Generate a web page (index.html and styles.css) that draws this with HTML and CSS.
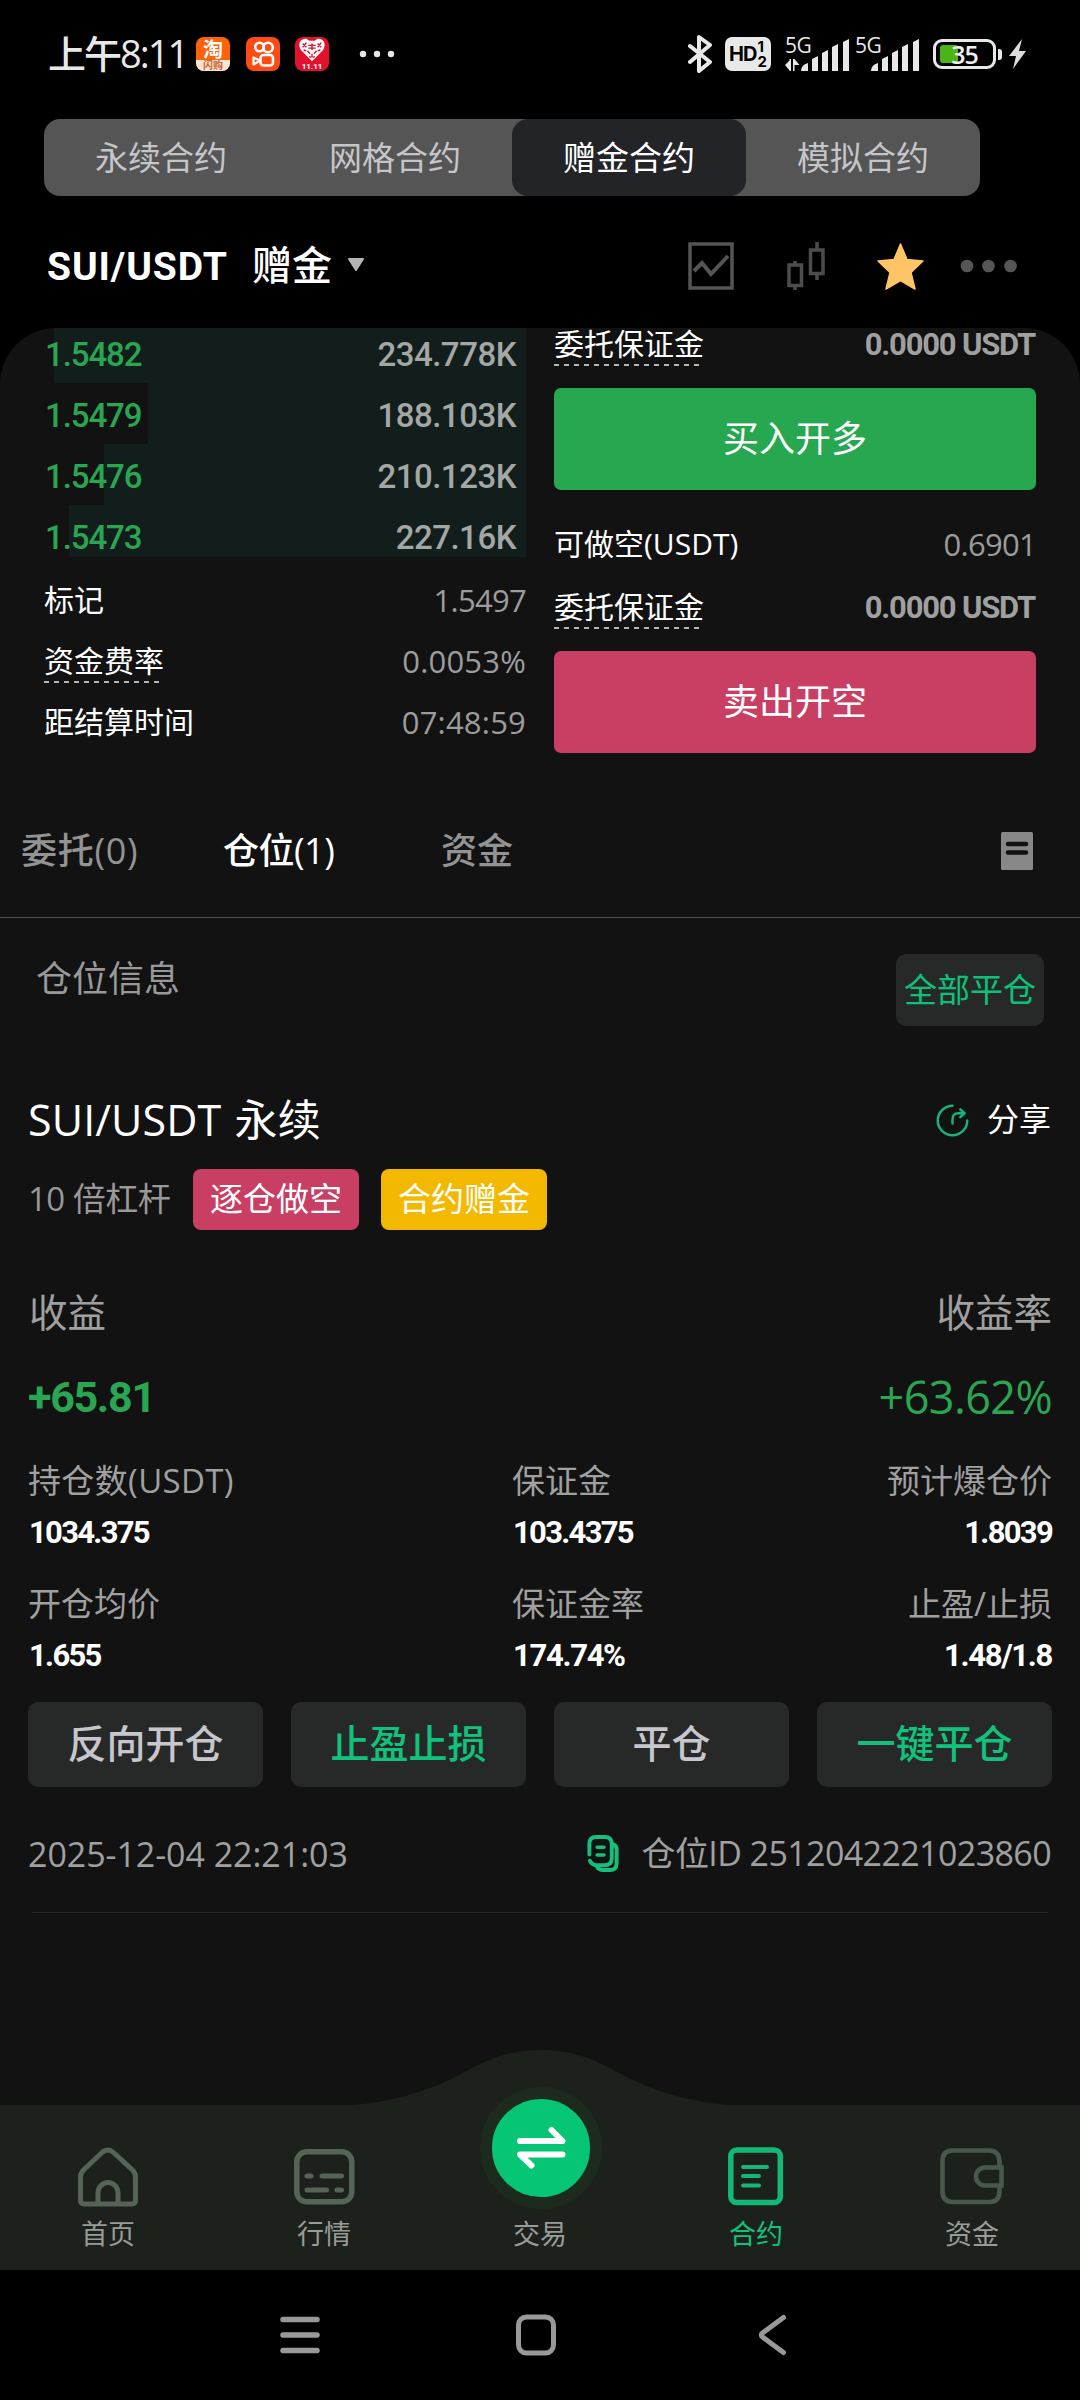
FILE: index.html
```html
<!DOCTYPE html>
<html lang="zh-CN">
<head>
<meta charset="utf-8">
<meta name="viewport" content="width=1080">
<title>SUI/USDT 赠金合约</title>
<link rel="stylesheet" href="styles.css">
</head>
<body>
<div class="screen">
  <header class="status">
    <div class="status-left">
      <span class="clock">上午8:11</span>
      <span class="app app-tao"><b>淘</b><i>闪购</i></span>
      <span class="app app-kuai">
        <svg viewBox="0 0 34 34" fill="none" stroke="#fff" stroke-width="2.6"><circle cx="13.5" cy="10" r="4.3"/><circle cx="22" cy="10.500" r="4.800"/><rect x="14.500" y="18" width="12.500" height="10.500" rx="3"/><path d="M14 23.500L7.500 20.500v7z" stroke-linejoin="round" stroke-width="2.200"/></svg>
      </span>
      <span class="app app-heart">
        <svg viewBox="0 0 34 28"><path d="M17 26L5 14C1 7 5 1 11 2l3 2h6l3-2c6-1 10 5 6 12z" fill="#fff"/><path d="M7 7l4 4M11 6l-4 5M23 7l4 4M27 6l-4 5M12 15l3 3M22 15l-3 3M13 9h8M13 12h8M17 7v7M8 14l3 1M26 14l-3 1M17 18v4M14 21l2 1M20 21l-2 1" stroke="#d8102c" stroke-width="1.500"/></svg>
        <i>11.11</i>
      </span>
      <svg class="more" viewBox="0 0 36 8" fill="#e8e8e8"><circle cx="4" cy="4" r="3.200"/><circle cx="18" cy="4" r="3.200"/><circle cx="32" cy="4" r="3.200"/></svg>
    </div>
    <div class="status-right">
      <svg class="bt" viewBox="0 0 24 40" fill="none" stroke="#e8e8e8" stroke-width="4" stroke-linejoin="round" stroke-linecap="round"><path d="M2 12l20 16-11 9V3l11 8L2 28"/></svg>
      <span class="hd"><b>HD</b><span><i>1</i><i>2</i></span></span>
      <span class="signal signal-one"><em>5G</em>
        <svg viewBox="0 0 66 34" fill="#e8e8e8"><path d="M2 28l5-5v11zM6.500 22H8v12H6.500zM10 22h1.500v12H10zM11.500 22l5 6h-5z"/><path d="M18 34q0-6 7-8v8zM29 22l6-3v15h-6zM39 16l6-3v21h-6zM49 10l6-3v27h-6zM60 5l6-3v32h-6z"/></svg>
      </span>
      <span class="signal signal-two"><em>5G</em>
        <svg viewBox="0 0 66 34" fill="#e8e8e8"><path d="M18 34q0-6 7-8v8zM29 22l6-3v15h-6zM39 16l6-3v21h-6zM49 10l6-3v27h-6zM60 5l6-3v32h-6z"/></svg>
      </span>
      <span class="battery"><i></i><b>35</b></span>
      <svg class="bolt" viewBox="0 0 17 30" fill="#dcdcdc"><path d="M13 0L0 17h7L4 30l13-18h-7z"/></svg>
    </div>
  </header>

  <nav class="segments">
    <a>永续合约</a><a>网格合约</a><a class="on">赠金合约</a><a>模拟合约</a>
  </nav>

  <div class="pair">
    <strong>SUI/USDT</strong><span class="pair-type">赠金</span>
    <svg class="caret" viewBox="0 0 18 14"><path d="M2 1h14L9 12z" fill="#b4b4b4" stroke="#b4b4b4" stroke-width="2" stroke-linejoin="round"/></svg>
    <div class="tools">
      <svg width="46" height="48" viewBox="0 0 46 48" fill="none" stroke="#555" stroke-width="3.500"><rect x="2" y="2" width="42" height="44"/><path d="M6 29l8-8 9 11 17-18" stroke-width="4"/></svg>
      <svg width="38" height="48" viewBox="0 0 38 48" fill="none" stroke="#4c4c4c" stroke-width="3.500"><rect x="2" y="23" width="12.500" height="20.500"/><path d="M8 19v4M8 44v4M30 0v7M30 33v5"/><rect x="23.500" y="8" width="12.500" height="23.500"/></svg>
      <svg width="47" height="48" viewBox="0 0 47 48"><path d="M23.500 2l6.500 15.500 16 1.500-12 11.500 4 16.500-14.500-8.500L9 47l4-16.500L1 19l16-1.500z" fill="#ffc466" stroke="#ffc466" stroke-width="1.500" stroke-linejoin="round"/></svg>
      <svg width="58" height="14" viewBox="0 0 58 14" fill="#555"><circle cx="7" cy="7" r="6.300"/><circle cx="28.500" cy="7" r="6.300"/><circle cx="50.500" cy="7" r="6.300"/></svg>
    </div>
  </div>

  <main class="sheet">
    <section class="trade">
      <div class="left">
        <div class="book">
          <div class="level" style="--depth:97.9%"><b>1.5482</b><span>234.778K</span></div>
          <div class="level" style="--depth:78.4%"><b>1.5479</b><span>188.103K</span></div>
          <div class="level" style="--depth:87.5%"><b>1.5476</b><span>210.123K</span></div>
          <div class="level" style="--depth:94.8%"><b>1.5473</b><span>227.16K</span></div>
        </div>
        <div class="stats">
          <div class="stat"><span>标记</span><em>1.5497</em></div>
          <div class="stat wide"><span class="dashed">资金费率</span><em>0.0053%</em></div>
          <div class="stat wide"><span>距结算时间</span><em>07:48:59</em></div>
        </div>
      </div>
      <div class="right">
        <div class="line first"><span class="dashed">委托保证金</span><b>0.0000 USDT</b></div>
        <button class="order buy">买入开多</button>
        <div class="line avail"><span>可做空(USDT)</span><em>0.6901</em></div>
        <div class="line"><span class="dashed">委托保证金</span><b>0.0000 USDT</b></div>
        <button class="order sell">卖出开空</button>
      </div>
    </section>

    <nav class="tabs">
      <a>委托(0)</a><a class="on">仓位(1)</a><a>资金</a>
      <svg viewBox="0 0 32 38"><rect width="32" height="38" rx="1.500" fill="#878787"/><path d="M7 12h18M7 20.500h18" stroke="#121212" stroke-width="4.500" stroke-linecap="round"/></svg>
    </nav>

    <div class="info"><span>仓位信息</span><button>全部平仓</button></div>

    <article class="card">
      <div class="row title">
        <h2>SUI/USDT 永续</h2>
        <span class="share"><svg viewBox="0 0 34 34" fill="none" stroke="#14b67a" stroke-width="2.500" stroke-linecap="round"><path d="M17 1.800A15.200 15.200 0 1 0 32.200 17"/><path d="M17 20v-4c0-4 2-6.500 6-6.500h5M25 5.500l4.500 4-4.500 4" stroke-linejoin="round"/></svg><i>分享</i></span>
      </div>
      <div class="tags"><span>10 倍杠杆</span><b class="short">逐仓做空</b><b class="bonus">合约赠金</b></div>
      <div class="row pnl-label"><span>收益</span><span>收益率</span></div>
      <div class="row pnl"><b>+65.81</b><span>+63.62%</span></div>
      <div class="grid">
        <div><span>持仓数(USDT)</span><b>1034.375</b></div>
        <div><span>保证金</span><b>103.4375</b></div>
        <div><span>预计爆仓价</span><b>1.8039</b></div>
        <div><span>开仓均价</span><b>1.655</b></div>
        <div><span>保证金率</span><b>174.74%</b></div>
        <div><span>止盈/止损</span><b>1.48/1.8</b></div>
      </div>
      <div class="actions"><button>反向开仓</button><button class="green">止盈止损</button><button>平仓</button><button class="green">一键平仓</button></div>
      <div class="row meta">
        <span class="date">2025-12-04 22:21:03</span>
        <span class="pid"><svg viewBox="0 0 32 38" fill="none" stroke="#14c07c" stroke-width="4" stroke-linecap="round" stroke-linejoin="round"><path d="M2 20V9q0-7 7-7h9q7 0 7 7v15q0 7-7 7H9q-4 0-6.500-4.500"/><path d="M26 9.500q4 1 4 5.500v14q0 7-7 7h-7q-4 0-6-3"/><path d="M10 12.500h7M10 20.500h7" stroke-width="3.600"/></svg>仓位ID 2512042221023860</span>
      </div>
      <hr>
    </article>
  </main>

  <nav class="bottom">
    <svg class="hump" viewBox="0 0 420 56"><path d="M0 56c50-1 93-12 130-32 27-15 48-24 80-24s53 9 80 24c37 20 80 31 130 32z" fill="#1d211c"/></svg>
    <a><svg viewBox="0 0 64 64" fill="none" stroke="#566456" stroke-width="5"><path d="M4.500 56V33q0-4 3-7L26 8.500q6-5 11.500 0L56.500 26q3 3 3 7v23q0 4-4 4h-47q-4 0-4-4z"/><path d="M22 60V49a10 10.500 0 0 1 20 0v11"/></svg>首页</a>
    <a><svg viewBox="0 0 64 64" fill="none" stroke="#566456" stroke-width="5.500" stroke-linecap="round"><rect x="4.800" y="7.800" width="55" height="50" rx="10"/><path d="M15 32h4M30 32h19.500M15 46h19.500M45 46h4.500" stroke-width="5"/></svg>行情</a>
    <a><svg viewBox="0 0 64 64"></svg>交易</a>
    <a class="on"><svg viewBox="0 0 64 64" fill="none" stroke="#14b876" stroke-width="5.500" stroke-linecap="round"><rect x="6.800" y="6" width="49.500" height="52.500" rx="6"/><path d="M19 23h24M19 32h16M19 41.500h16" stroke-width="4"/></svg>合约</a>
    <a><svg viewBox="0 0 64 64" fill="none" stroke="#48584a" stroke-width="4.600"><path d="M59.500 22v-4q0-11-10-11.500H12Q2.500 7 2.500 17v30q0 10.500 9.500 11h37.500q10 0 10-11v-4"/><path d="M61.500 23.500H45a9 9 0 0 0 0 18h16.500z"/></svg>资金</a>
    <span class="swap"><svg viewBox="0 0 98 98" fill="none" stroke="#fff" stroke-width="6" stroke-linecap="round" stroke-linejoin="round"><path d="M28 42h42.500L59.500 31M70.500 55.500H28L39.500 66.500"/></svg></span>
  </nav>

  <footer class="system">
    <svg viewBox="0 0 42 42" stroke="#9b9898" stroke-width="5.500" stroke-linecap="round"><path d="M4 5.500h34M4 21h34M4 36.500h34"/></svg>
    <svg viewBox="0 0 42 42" fill="none" stroke="#9b9898" stroke-width="5"><rect x="3.500" y="3" width="35" height="36" rx="8"/></svg>
    <svg viewBox="0 0 42 42" fill="none" stroke="#9b9898" stroke-width="5" stroke-linecap="round" stroke-linejoin="round"><path d="M32.500 3.500L11.500 19q-2.500 2 0 4l21 15.500"/></svg>
  </footer>
</div>
</body>
</html>
```
FILE: styles.css
```css
* { box-sizing: border-box; }
body { margin: 0; background: #000; }
i, em { font-style: normal; }
svg { display: block; flex: none; }
a, span, b, button, h2 { white-space: nowrap; }
button { border: 0; padding: 0; font-family: inherit; color: inherit; }

.screen {
  width: 1080px;
  height: 2400px;
  overflow: hidden;
  display: flex;
  flex-direction: column;
  background: #000;
  color: #fff;
  font-family: "Open Sans", "Noto Sans CJK SC", sans-serif;
}

/* status bar */
.status { height: 119px; padding: 34px 54px 0 48px; display: flex; justify-content: space-between; }
.status-left, .status-right { display: flex; align-items: center; height: 40px; }
.clock { width: 148px; font-size: 38px; line-height: 40px; letter-spacing: -2px; color: #e8e8e8; font-weight: 500; padding-bottom: 2px; }
.app { width: 34px; height: 34px; margin-right: 15.500px; border-radius: 8px; overflow: hidden; display: flex; flex-direction: column; align-items: center; background: #ff4a12; }
.app svg { width: 34px; height: 34px; }
.app-tao { background: #ff6208; }
.app-tao b { height: 23px; font: 700 20px/23px "Noto Sans CJK SC", sans-serif; }
.app-tao i { width: 34px; height: 11px; background: #fbe6d6; color: #c8622c; font-size: 10px; line-height: 11px; text-align: center; font-weight: 700; }
.app-heart { background: #e3122c; }
.app-heart svg { height: 26px; width: 32px; }
.app-heart i { font: 700 8px/8px Roboto, sans-serif; }
.more { width: 36px; height: 8px; margin-left: 14px; }
.bt { width: 24px; height: 40px; margin-right: 13px; }
.hd { width: 46px; height: 34px; border-radius: 7px; background: #e8e8e8; color: #000; display: flex; align-items: center; justify-content: center; gap: 1px; margin-right: 12px; font-family: Inter, sans-serif; }
.hd b { font-size: 20px; letter-spacing: -1px; }
.hd span { display: flex; flex-direction: column; font-size: 15px; line-height: 15px; font-weight: 700; }
.signal { position: relative; width: 66px; height: 34px; }
.signal svg { width: 66px; height: 34px; }
.signal em { position: absolute; left: 2px; top: -2px; font-size: 21px; line-height: 20px; color: #e8e8e8; letter-spacing: -.5px; font-weight: 500; }
.signal-two { margin-left: 4px; }
.battery { position: relative; width: 63px; height: 30px; margin-left: 14px; border: 3px solid #e8e8e8; border-radius: 9px; display: flex; align-items: center; justify-content: center; }
.battery::after { content: ""; position: absolute; left: 62px; top: 7px; width: 4px; height: 11px; border-radius: 0 3px 3px 0; background: #e8e8e8; }
.battery i { position: absolute; left: 4px; top: 3px; width: 18px; height: 18px; border-radius: 3px; background: #4bb514; }
.battery b { position: relative; font-size: 25px; line-height: 24px; font-weight: 600; letter-spacing: -1px; color: #eee; }
.bolt { width: 17px; height: 30px; margin-left: 13px; }

/* contract type switch */
.segments { width: 936px; height: 77px; margin-left: 44px; flex: none; display: flex; border-radius: 16px; background: #555; }
.segments a { flex: 1; text-align: center; font-size: 33px; line-height: 77px; color: #c5c5ca; }
.segments .on { border-radius: 16px; background: #232428; color: #fff; }

/* pair header */
.pair { height: 132px; flex: none; padding: 0 62px 0 47px; display: flex; align-items: center; }
.pair strong { width: 205px; font: 700 39px/60px Roboto, sans-serif; letter-spacing: .9px; padding-top: 10px; }
.pair-type { width: 95px; font-size: 40px; line-height: 60px; font-weight: 500; padding-top: 5px; }
.caret { width: 18px; height: 14px; margin-top: 6px; }
.tools { flex: 1; margin-top: 8px; display: flex; align-items: center; justify-content: flex-end; }
.tools svg:nth-child(2) { margin-left: 53px; }
.tools svg:nth-child(3) { margin-left: 52px; }
.tools svg:nth-child(4) { margin-left: 36px; }

/* main sheet */
.sheet { height: 1777px; flex: none; overflow: hidden; border-radius: 56px 56px 0 0; background: #121212; }
.trade { height: 457px; padding: 0 44px; display: grid; grid-template-columns: 1fr 1fr; gap: 28px; }
.book { margin-top: -6px; }
.level { height: 61px; padding: 2px 10px 0 1px; display: flex; justify-content: space-between; font: 500 33px/61px Roboto, sans-serif; background: linear-gradient(#121e1b, #121e1b) right / var(--depth) 100% no-repeat; }
.level:last-child { height: 52px; }
.level b { color: #2aa653; font-weight: 500; letter-spacing: -1.100px; }
.level span { color: #a3a7a5; letter-spacing: -.5px; }
.stats { margin-top: 12px; }
.stat { height: 61px; display: flex; align-items: center; justify-content: space-between; }
.stat span, .line span { font-size: 30px; line-height: 44px; }
.stat em, .line em { font-size: 31px; line-height: 44px; color: #9c9c9c; letter-spacing: -.7px; }
.stat.wide em { letter-spacing: .2px; }
.dashed { background: repeating-linear-gradient(90deg, #b5b5b5 0 5px, transparent 5px 10px) left bottom / calc(100% - 3px) 2px no-repeat; }
.line { height: 44px; display: flex; justify-content: space-between; }
.line b { font: 700 31px/46px Roboto, sans-serif; letter-spacing: -1.200px; color: #a0a0a0; padding-right: 1px; }
.line.first { height: 38px; }
.line.first span { line-height: 32px; }
.line.first b { line-height: 34px; }
.order { display: block; width: 100%; height: 102px; margin: 22px 0 32px; border-radius: 7px; font-size: 36px; line-height: 102px; color: #fff; }
.buy { background: #27a850; }
.sell { background: #c93f64; }
.avail { margin-bottom: 19px; }

/* order / position tabs */
.tabs { height: 133px; padding-left: 21px; padding-right: 47px; border-bottom: 1px solid #505050; display: flex; align-items: center; }
.tabs a { margin-top: -5px; font-size: 36px; font-weight: 500; color: #939393; }
.tabs a:nth-child(1) { width: 202px; letter-spacing: .7px; }
.tabs a:nth-child(2) { width: 218px; letter-spacing: -.5px; }
.tabs .on { color: #fff; }
.tabs svg { width: 32px; height: 38px; margin-left: auto; }
.info { padding: 36px 36px 0; height: 108px; display: flex; justify-content: space-between; }
.info span { font-size: 36px; line-height: 49px; color: #999; }
.info button { width: 148px; height: 72px; border-radius: 10px; background: #272928; color: #0cc27a; font-size: 33px; line-height: 70px; }

/* position card */
.card { padding: 64px 28px 0; }
.row { height: 60px; display: flex; align-items: center; justify-content: space-between; }
h2 { margin: 0; font-size: 43px; line-height: 60px; font-weight: 400; letter-spacing: .1px; word-spacing: 2px; }
.share { display: flex; align-items: center; gap: 18px; font-size: 32px; padding-right: 1px; }
.share i { line-height: 44px; padding-bottom: 3px; }
.share svg { width: 33px; height: 33px; }
.tags { height: 61px; margin-top: 19px; display: flex; align-items: center; }
.tags span { width: 165px; font-size: 33px; line-height: 44px; padding-bottom: 2px; letter-spacing: -.5px; color: #999; }
.tags b { width: 166px; height: 61px; border-radius: 8px; font-size: 33px; line-height: 60px; font-weight: 400; text-align: center; }
.short { background: #c93f64; }
.bonus { margin-left: 22px; background: #f2b900; }
.pnl-label { margin-top: 53px; padding-left: 1px; font-size: 38.500px; line-height: 56px; padding-bottom: 3px; color: #a0a0a0; }
.pnl { margin-top: 23px; color: #2aa653; font-size: 45px; }
.pnl b { font: 700 43px/60px Roboto, sans-serif; letter-spacing: -1.300px; padding-top: 2px; }
.pnl span { letter-spacing: -.600px; }
.grid { margin-top: 32px; display: grid; grid-template-columns: 484px 1fr auto; row-gap: 27px; }
.grid div { display: flex; flex-direction: column; gap: 8px; }
.grid div:nth-child(3n) { align-items: flex-end; }
.grid span { height: 44px; font-size: 33px; line-height: 45px; color: #a0a0a0; }
.grid div:first-child span { letter-spacing: .35px; }
.grid b { height: 44px; font: 700 31px/46px Roboto, sans-serif; letter-spacing: -1.700px; padding-left: 1px; }
.grid div:nth-child(5) b, .grid div:nth-child(6) b { letter-spacing: -1.300px; }
.actions { margin-top: 25px; height: 85px; display: grid; grid-template-columns: repeat(4, 1fr); gap: 28px; }
.actions button { border-radius: 10px; background: #272928; color: #c6c6cc; font-size: 39px; line-height: 82px; padding-bottom: 3px; font-weight: 500; }
.actions .green { color: #10c27b; }
.meta { height: 44px; margin-top: 44px; font-size: 34px; line-height: 44px; color: #a0a0a0; }
.date { letter-spacing: -.05px; padding-top: 1px; }
.pid { display: flex; align-items: center; gap: 23px; padding-right: 1px; letter-spacing: -.6px; }
.pid svg { width: 32px; height: 37px; }
hr { height: 1px; margin: 37px 4px 0; border: 0; background: #282828; }

/* bottom navigation */
.bottom { position: relative; height: 165px; flex: none; padding-top: 39px; display: flex; background: #1d211c; }
.bottom a { width: 216px; display: flex; flex-direction: column; align-items: center; gap: 8px; font-size: 27px; line-height: 36px; color: #989c98; }
.bottom a svg { width: 64px; height: 64px; }
.bottom .on { color: #10c27b; }
.hump { position: absolute; left: 331px; top: -55px; width: 420px; height: 56px; }
.swap { position: absolute; left: 480px; top: -18px; width: 122px; height: 122px; border-radius: 50%; background: #06c676; border: 12px solid #1d2a1e; }

/* system navigation */
.system { height: 130px; flex: none; display: flex; justify-content: center; gap: 194px; padding: 44px 8px 0 0; }
.system svg { width: 42px; height: 42px; }
```
